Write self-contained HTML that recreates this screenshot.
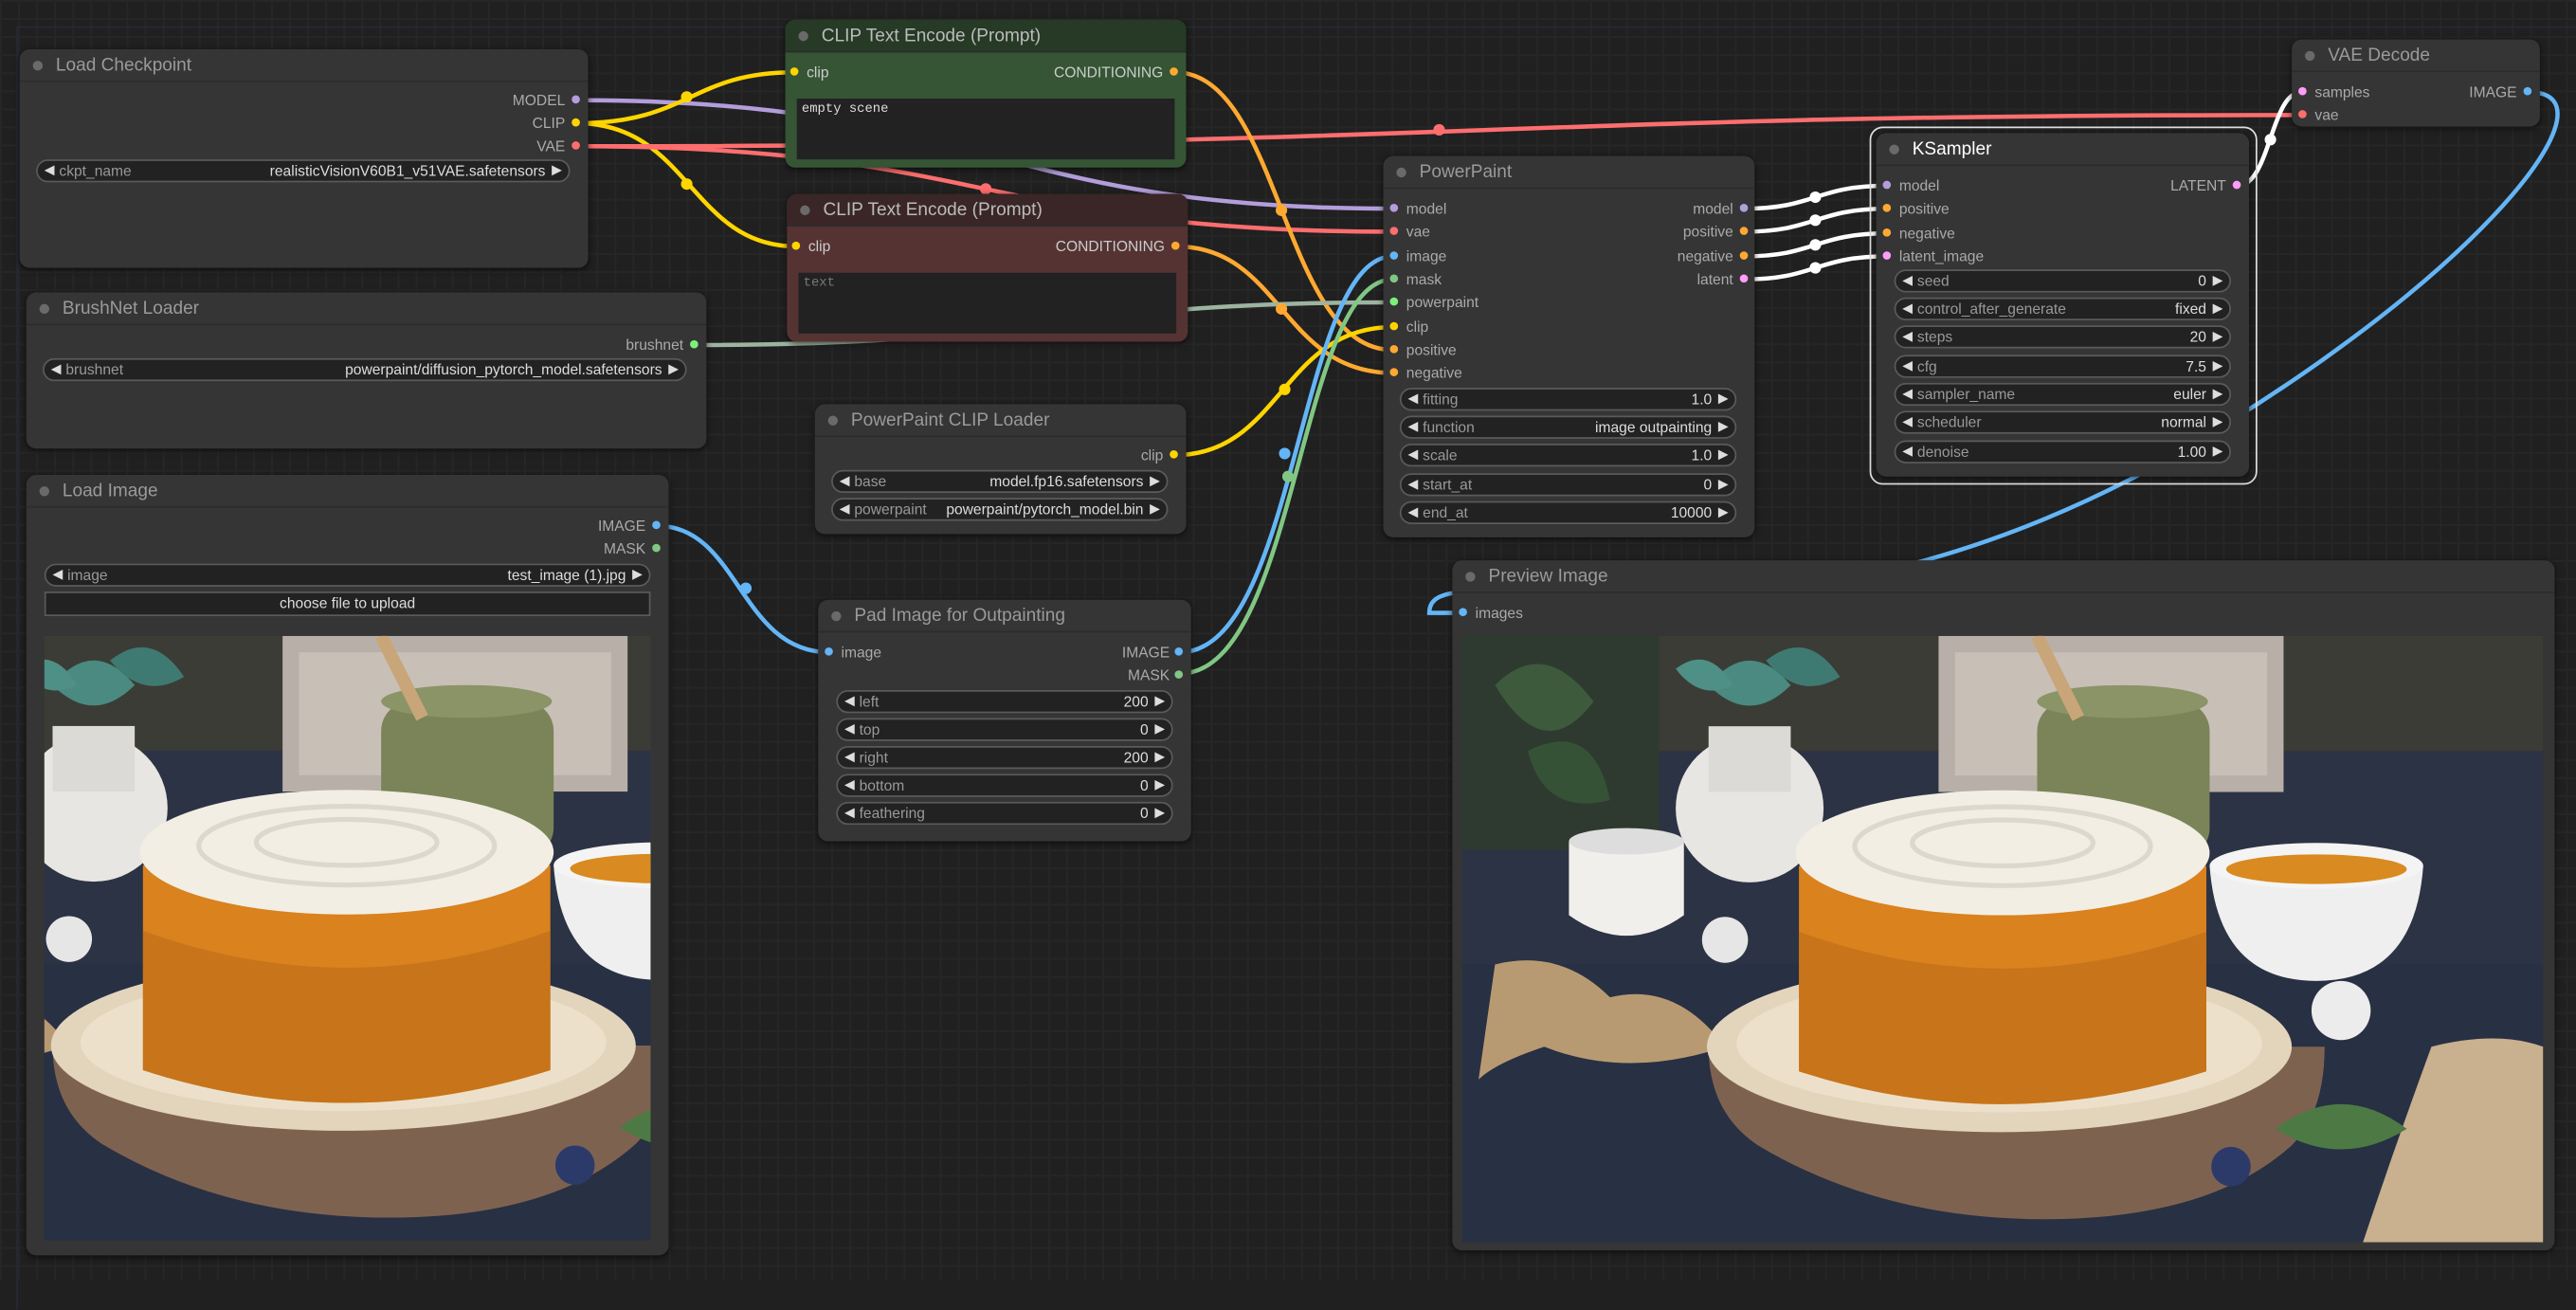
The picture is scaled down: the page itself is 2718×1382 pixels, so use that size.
<!DOCTYPE html>
<html><head><meta charset="utf-8"><style>
html,body{margin:0;padding:0;width:2718px;height:1350px;overflow:hidden;background:#202020}
#s{position:absolute;left:0;top:0;width:1568px;height:779px;transform:scale(1.73342);transform-origin:0 0;font-family:"Liberation Sans",sans-serif;
background-color:#202020;background-image:linear-gradient(#262626 1px,transparent 1px),linear-gradient(90deg,#262626 1px,transparent 1px);background-size:11px 11px}
.n{position:absolute;background:#353535;border-radius:6px;box-shadow:0 1px 4px rgba(0,0,0,.6)}
.t{position:absolute;left:0;right:0;top:0;height:20px;border-bottom:1px solid #2c2c2c;border-radius:6px 6px 0 0;color:#9a9a9a;font-size:11px;line-height:20px;padding-left:22px;box-sizing:border-box}
.t:before{content:"";position:absolute;left:8px;top:7px;width:6px;height:6px;border-radius:50%;background:#6a6a6a}
.l{position:absolute;font-size:9px;color:#aaa;line-height:10px;white-space:nowrap}
.r{text-align:right}
.d{position:absolute;width:5px;height:5px;border-radius:50%}
.w{position:absolute;height:12px;border-radius:7px;background:#222;border:1px solid #5a5a5a;font-size:9px;line-height:12px;color:#999;white-space:nowrap}
.w .a{position:absolute;left:4px;color:#ddd;font-size:8px}
.w .b{position:absolute;right:4px;color:#ddd;font-size:8px}
.w .k{position:absolute;left:13px}
.w .v{position:absolute;right:14px;color:#ddd}
.ta{position:absolute;background:#222;font-family:"Liberation Mono",monospace;font-size:8px;color:#ddd;padding:2px 3px;box-sizing:border-box}
</style></head><body><div id="s">
<div style="position:absolute;left:10px;top:16px;width:1560px;height:780px;border:1px solid #252a38;border-right:none;border-bottom:none"></div>
<svg style="position:absolute;left:0;top:0" width="1568" height="779" fill="none" stroke-width="2.6" stroke-linecap="round">
<path d="M351 61 C600 61 600 127 848 127" stroke="#b39ddb"/>
<path d="M351 75 C420 75 420 44 484 44" stroke="#ffd500"/>
<path d="M351 75 C420 75 420 150 485 150" stroke="#ffd500"/>
<path d="M351 89 C600 89 600 141 848 141" stroke="#ff6e6e"/>
<path d="M351 89 C900 89 900 70 1401 70" stroke="#ff6e6e"/>
<path d="M715 44 C780 44 780 213 848 213" stroke="#ffa931"/>
<path d="M716 150 C780 150 780 227 848 227" stroke="#ffa931"/>
<path d="M423 210 C640 210 640 184 848 184" stroke="#9db4a0"/>
<path d="M715 277 C780 277 780 199 848 199" stroke="#ffd500"/>
<path d="M400 320 C450 320 450 397 505 397" stroke="#64b5f6"/>
<path d="M718 397 C790 397 790 156 848 156" stroke="#64b5f6"/>
<path d="M718 410 C790 410 790 170 848 170" stroke="#81c784"/>
<path d="M1062 127 C1105 127 1105 113 1149 113" stroke="#fff"/>
<path d="M1062 141 C1105 141 1105 127 1149 127" stroke="#fff"/>
<path d="M1062 156 C1105 156 1105 142 1149 142" stroke="#fff"/>
<path d="M1062 170 C1105 170 1105 156 1149 156" stroke="#fff"/>
<path d="M1362 113 C1382 113 1382 56 1401 56" stroke="#fff"/>
<path d="M1539 56 C1600 56 1500 180 1300 290 C1050 420 870 330 870 373 L890 373" stroke="#64b5f6"/>
<g fill="#ffd500" stroke="none"><circle cx="418" cy="59" r="3.5"/><circle cx="418" cy="112" r="3.5"/><circle cx="782" cy="237" r="3.5"/></g>
<g fill="#ff6e6e" stroke="none"><circle cx="876" cy="79" r="3.5"/><circle cx="600" cy="115" r="3.5"/></g>
<g fill="#ffa931" stroke="none"><circle cx="780" cy="128" r="3.5"/><circle cx="780" cy="188" r="3.5"/></g>
<circle cx="454" cy="358" r="3.5" fill="#64b5f6" stroke="none"/><circle cx="782" cy="276" r="3.5" fill="#64b5f6" stroke="none"/><circle cx="784" cy="290" r="3.5" fill="#81c784" stroke="none"/>
<g fill="#fff" stroke="none"><circle cx="1105" cy="120" r="3.5"/><circle cx="1105" cy="134" r="3.5"/><circle cx="1105" cy="149" r="3.5"/><circle cx="1105" cy="163" r="3.5"/><circle cx="1382" cy="85" r="3.5"/></g>
</svg>

<svg width="0" height="0" style="position:absolute"><defs>
<g id="pic">
<rect x="0" y="0" width="658" height="369" fill="#2c3344"/>
<rect x="0" y="0" width="658" height="70" fill="#3b3c36"/>
<rect x="290" y="0" width="210" height="95" fill="#b8b0a8"/>
<rect x="300" y="10" width="190" height="75" fill="#cfc6bc" opacity=".7"/>
<rect x="0" y="0" width="120" height="130" fill="#2e3a30"/>
<path d="M20 30 q30 -30 60 10 q-30 40 -60 -10z" fill="#3d5a3d"/>
<path d="M40 70 q40 -20 50 30 q-40 10 -50 -30z" fill="#355236"/>
<rect x="0" y="200" width="658" height="169" fill="#283043"/>
<ellipse cx="175" cy="105" rx="45" ry="45" fill="#e8e6e2"/>
<rect x="150" y="55" width="50" height="40" fill="#dcdad6"/>
<path d="M150 30 q25 -30 50 0 q-25 25 -50 0z" fill="#4a8a80"/>
<path d="M185 15 q25 -20 45 10 q-25 15 -45 -10z" fill="#3f7a72"/>
<path d="M130 20 q20 -15 35 10 q-20 10 -35 -10z" fill="#4e8f86"/>
<rect x="350" y="40" width="105" height="95" rx="18" fill="#7a8458"/>
<ellipse cx="402" cy="40" rx="52" ry="10" fill="#8a9466"/>
<line x1="350" y1="0" x2="375" y2="50" stroke="#c9a57a" stroke-width="8"/>
<path d="M455 140 h130 q-5 70 -65 70 q-60 0 -65 -70z" fill="#efefef"/>
<ellipse cx="520" cy="140" rx="65" ry="14" fill="#f4f4f4"/>
<ellipse cx="520" cy="142" rx="55" ry="9" fill="#d98a20"/>
<path d="M65 125 h70 v45 q-35 25 -70 0z" fill="#f0efec"/>
<ellipse cx="100" cy="125" rx="35" ry="8" fill="#ddd"/>
<path d="M20 200 q40 -10 70 20 q40 -10 70 30 q-60 20 -110 0 q-30 10 -40 20z" fill="#b89a72"/>
<path d="M590 250 q40 -10 68 0 v120 h-110 q20 -60 42 -120z" fill="#c9b08e"/>
<path d="M150 250 q0 40 30 60 q75 45 175 45 q100 0 150 -45 q20 -20 20 -60z" fill="#7e6250"/>
<ellipse cx="327" cy="250" rx="178" ry="52" fill="#e3d4bc"/>
<ellipse cx="327" cy="248" rx="160" ry="42" fill="#ece0cb"/>
<path d="M205 140 v125 q122 40 248 0 v-125z" fill="#d9821e"/>
<path d="M205 180 v85 q122 40 248 0 v-85 q-124 45 -248 0z" fill="#b86a18" opacity=".55"/>
<ellipse cx="329" cy="132" rx="126" ry="38" fill="#f2eee4"/>
<ellipse cx="329" cy="128" rx="90" ry="24" fill="none" stroke="#dcd8ce" stroke-width="3"/>
<ellipse cx="329" cy="126" rx="55" ry="14" fill="none" stroke="#dcd8ce" stroke-width="3"/>
<circle cx="468" cy="323" r="12" fill="#2c3a6a"/>
<circle cx="535" cy="228" r="18" fill="#ececec"/>
<circle cx="160" cy="185" r="14" fill="#e6e6e6"/>
<path d="M495 300 q40 -30 80 0 q-40 25 -80 0z" fill="#4d7a44"/>
</g></defs></svg>

<div class="n" style="left:12px;top:30px;width:346px;height:133px"><div class="t">Load Checkpoint</div></div>
<div class="l r" style="left:250px;top:56px;width:94px">MODEL</div><div class="d" style="left:348px;top:58px;background:#b39ddb"></div>
<div class="l r" style="left:250px;top:70px;width:94px">CLIP</div><div class="d" style="left:348px;top:72px;background:#ffd500"></div>
<div class="l r" style="left:250px;top:84px;width:94px">VAE</div><div class="d" style="left:348px;top:86px;background:#ff6e6e"></div>
<div class="w" style="left:22px;top:97px;width:323px"><span class="a">◀</span><span class="k">ckpt_name</span><span class="v">realisticVisionV60B1_v51VAE.safetensors</span><span class="b">▶</span></div>

<div class="n" style="left:478px;top:12px;width:244px;height:90px;background:#355535"><div class="t" style="background:#263a26;color:#bbb">CLIP Text Encode (Prompt)</div></div>
<div class="d" style="left:481px;top:41px;background:#ffd500"></div><div class="l" style="left:491px;top:39px;color:#ccc">clip</div>
<div class="l r" style="left:600px;top:39px;width:108px;color:#ccc">CONDITIONING</div><div class="d" style="left:712px;top:41px;background:#ffa931"></div>
<div class="ta" style="left:485px;top:60px;width:230px;height:37px">empty scene</div>

<div class="n" style="left:479px;top:118px;width:244px;height:90px;background:#553333"><div class="t" style="background:#3a2626;color:#bbb">CLIP Text Encode (Prompt)</div></div>
<div class="d" style="left:482px;top:147px;background:#ffd500"></div><div class="l" style="left:492px;top:145px;color:#ccc">clip</div>
<div class="l r" style="left:600px;top:145px;width:109px;color:#ccc">CONDITIONING</div><div class="d" style="left:713px;top:147px;background:#ffa931"></div>
<div class="ta" style="left:486px;top:166px;width:230px;height:37px;color:#777">text</div>

<div class="n" style="left:16px;top:178px;width:414px;height:95px"><div class="t">BrushNet Loader</div></div>
<div class="l r" style="left:300px;top:205px;width:116px">brushnet</div><div class="d" style="left:420px;top:207px;background:#7cf07c"></div>
<div class="w" style="left:26px;top:218px;width:390px"><span class="a">◀</span><span class="k">brushnet</span><span class="v">powerpaint/diffusion_pytorch_model.safetensors</span><span class="b">▶</span></div>

<div class="n" style="left:496px;top:246px;width:226px;height:79px"><div class="t">PowerPaint CLIP Loader</div></div>
<div class="l r" style="left:600px;top:272px;width:108px">clip</div><div class="d" style="left:712px;top:274px;background:#ffd500"></div>
<div class="w" style="left:506px;top:286px;width:203px"><span class="a">◀</span><span class="k">base</span><span class="v">model.fp16.safetensors</span><span class="b">▶</span></div>
<div class="w" style="left:506px;top:303px;width:203px"><span class="a">◀</span><span class="k">powerpaint</span><span class="v">powerpaint/pytorch_model.bin</span><span class="b">▶</span></div>

<div class="n" style="left:16px;top:289px;width:391px;height:475px"><div class="t">Load Image</div></div>
<div class="l r" style="left:300px;top:315px;width:93px">IMAGE</div><div class="d" style="left:397px;top:317px;background:#64b5f6"></div>
<div class="l r" style="left:300px;top:329px;width:93px">MASK</div><div class="d" style="left:397px;top:331px;background:#81c784"></div>
<div class="w" style="left:27px;top:343px;width:367px"><span class="a">◀</span><span class="k">image</span><span class="v">test_image (1).jpg</span><span class="b">▶</span></div>
<div class="w" style="left:27px;top:360px;width:367px;height:13px;border-radius:0;text-align:center;color:#ddd">choose file to upload</div>
<svg style="position:absolute;left:27px;top:387px" width="369" height="368" viewBox="145 0 369 369" preserveAspectRatio="none"><use href="#pic"/></svg>

<div class="n" style="left:498px;top:365px;width:227px;height:147px"><div class="t">Pad Image for Outpainting</div></div>
<div class="d" style="left:502px;top:394px;background:#64b5f6"></div><div class="l" style="left:512px;top:392px">image</div>
<div class="l r" style="left:620px;top:392px;width:92px">IMAGE</div><div class="d" style="left:715px;top:394px;background:#64b5f6"></div>
<div class="l r" style="left:620px;top:406px;width:92px">MASK</div><div class="d" style="left:715px;top:408px;background:#81c784"></div>
<div class="w" style="left:509px;top:420px;width:203px"><span class="a">◀</span><span class="k">left</span><span class="v">200</span><span class="b">▶</span></div>
<div class="w" style="left:509px;top:437px;width:203px"><span class="a">◀</span><span class="k">top</span><span class="v">0</span><span class="b">▶</span></div>
<div class="w" style="left:509px;top:454px;width:203px"><span class="a">◀</span><span class="k">right</span><span class="v">200</span><span class="b">▶</span></div>
<div class="w" style="left:509px;top:471px;width:203px"><span class="a">◀</span><span class="k">bottom</span><span class="v">0</span><span class="b">▶</span></div>
<div class="w" style="left:509px;top:488px;width:203px"><span class="a">◀</span><span class="k">feathering</span><span class="v">0</span><span class="b">▶</span></div>

<div class="n" style="left:842px;top:95px;width:226px;height:232px"><div class="t">PowerPaint</div></div>
<div class="d" style="left:846px;top:124px;background:#b39ddb"></div><div class="l" style="left:856px;top:122px">model</div>
<div class="d" style="left:846px;top:138px;background:#ff6e6e"></div><div class="l" style="left:856px;top:136px">vae</div>
<div class="d" style="left:846px;top:153px;background:#64b5f6"></div><div class="l" style="left:856px;top:151px">image</div>
<div class="d" style="left:846px;top:167px;background:#81c784"></div><div class="l" style="left:856px;top:165px">mask</div>
<div class="d" style="left:846px;top:181px;background:#7cf07c"></div><div class="l" style="left:856px;top:179px">powerpaint</div>
<div class="d" style="left:846px;top:196px;background:#ffd500"></div><div class="l" style="left:856px;top:194px">clip</div>
<div class="d" style="left:846px;top:210px;background:#ffa931"></div><div class="l" style="left:856px;top:208px">positive</div>
<div class="d" style="left:846px;top:224px;background:#ffa931"></div><div class="l" style="left:856px;top:222px">negative</div>
<div class="l r" style="left:960px;top:122px;width:95px">model</div><div class="d" style="left:1059px;top:124px;background:#b39ddb"></div>
<div class="l r" style="left:960px;top:136px;width:95px">positive</div><div class="d" style="left:1059px;top:138px;background:#ffa931"></div>
<div class="l r" style="left:960px;top:151px;width:95px">negative</div><div class="d" style="left:1059px;top:153px;background:#ffa931"></div>
<div class="l r" style="left:960px;top:165px;width:95px">latent</div><div class="d" style="left:1059px;top:167px;background:#ff9cf9"></div>
<div class="w" style="left:852px;top:236px;width:203px"><span class="a">◀</span><span class="k">fitting</span><span class="v">1.0</span><span class="b">▶</span></div>
<div class="w" style="left:852px;top:253px;width:203px"><span class="a">◀</span><span class="k">function</span><span class="v">image outpainting</span><span class="b">▶</span></div>
<div class="w" style="left:852px;top:270px;width:203px"><span class="a">◀</span><span class="k">scale</span><span class="v">1.0</span><span class="b">▶</span></div>
<div class="w" style="left:852px;top:288px;width:203px"><span class="a">◀</span><span class="k">start_at</span><span class="v">0</span><span class="b">▶</span></div>
<div class="w" style="left:852px;top:305px;width:203px"><span class="a">◀</span><span class="k">end_at</span><span class="v">10000</span><span class="b">▶</span></div>

<div style="position:absolute;left:1138px;top:77px;width:234px;height:216px;border:1px solid #ddd;border-radius:8px"></div>
<div class="n" style="left:1142px;top:81px;width:227px;height:209px"><div class="t" style="color:#fff">KSampler</div></div>
<div class="d" style="left:1146px;top:110px;background:#b39ddb"></div><div class="l" style="left:1156px;top:108px">model</div>
<div class="d" style="left:1146px;top:124px;background:#ffa931"></div><div class="l" style="left:1156px;top:122px">positive</div>
<div class="d" style="left:1146px;top:139px;background:#ffa931"></div><div class="l" style="left:1156px;top:137px">negative</div>
<div class="d" style="left:1146px;top:153px;background:#ff9cf9"></div><div class="l" style="left:1156px;top:151px">latent_image</div>
<div class="l r" style="left:1260px;top:108px;width:95px">LATENT</div><div class="d" style="left:1359px;top:110px;background:#ff9cf9"></div>
<div class="w" style="left:1153px;top:164px;width:203px"><span class="a">◀</span><span class="k">seed</span><span class="v">0</span><span class="b">▶</span></div>
<div class="w" style="left:1153px;top:181px;width:203px"><span class="a">◀</span><span class="k">control_after_generate</span><span class="v">fixed</span><span class="b">▶</span></div>
<div class="w" style="left:1153px;top:198px;width:203px"><span class="a">◀</span><span class="k">steps</span><span class="v">20</span><span class="b">▶</span></div>
<div class="w" style="left:1153px;top:216px;width:203px"><span class="a">◀</span><span class="k">cfg</span><span class="v">7.5</span><span class="b">▶</span></div>
<div class="w" style="left:1153px;top:233px;width:203px"><span class="a">◀</span><span class="k">sampler_name</span><span class="v">euler</span><span class="b">▶</span></div>
<div class="w" style="left:1153px;top:250px;width:203px"><span class="a">◀</span><span class="k">scheduler</span><span class="v">normal</span><span class="b">▶</span></div>
<div class="w" style="left:1153px;top:268px;width:203px"><span class="a">◀</span><span class="k">denoise</span><span class="v">1.00</span><span class="b">▶</span></div>

<div class="n" style="left:1395px;top:24px;width:151px;height:53px"><div class="t">VAE Decode</div></div>
<div class="d" style="left:1399px;top:53px;background:#ff9cf9"></div><div class="l" style="left:1409px;top:51px">samples</div>
<div class="d" style="left:1399px;top:67px;background:#ff6e6e"></div><div class="l" style="left:1409px;top:65px">vae</div>
<div class="l r" style="left:1470px;top:51px;width:62px">IMAGE</div><div class="d" style="left:1536px;top:53px;background:#64b5f6"></div>

<div class="n" style="left:884px;top:341px;width:671px;height:420px"><div class="t">Preview Image</div></div>
<div class="d" style="left:888px;top:370px;background:#64b5f6"></div><div class="l" style="left:898px;top:368px">images</div>
<svg style="position:absolute;left:890px;top:387px" width="658" height="369" viewBox="0 0 658 369"><use href="#pic"/></svg>
</div></body></html>
